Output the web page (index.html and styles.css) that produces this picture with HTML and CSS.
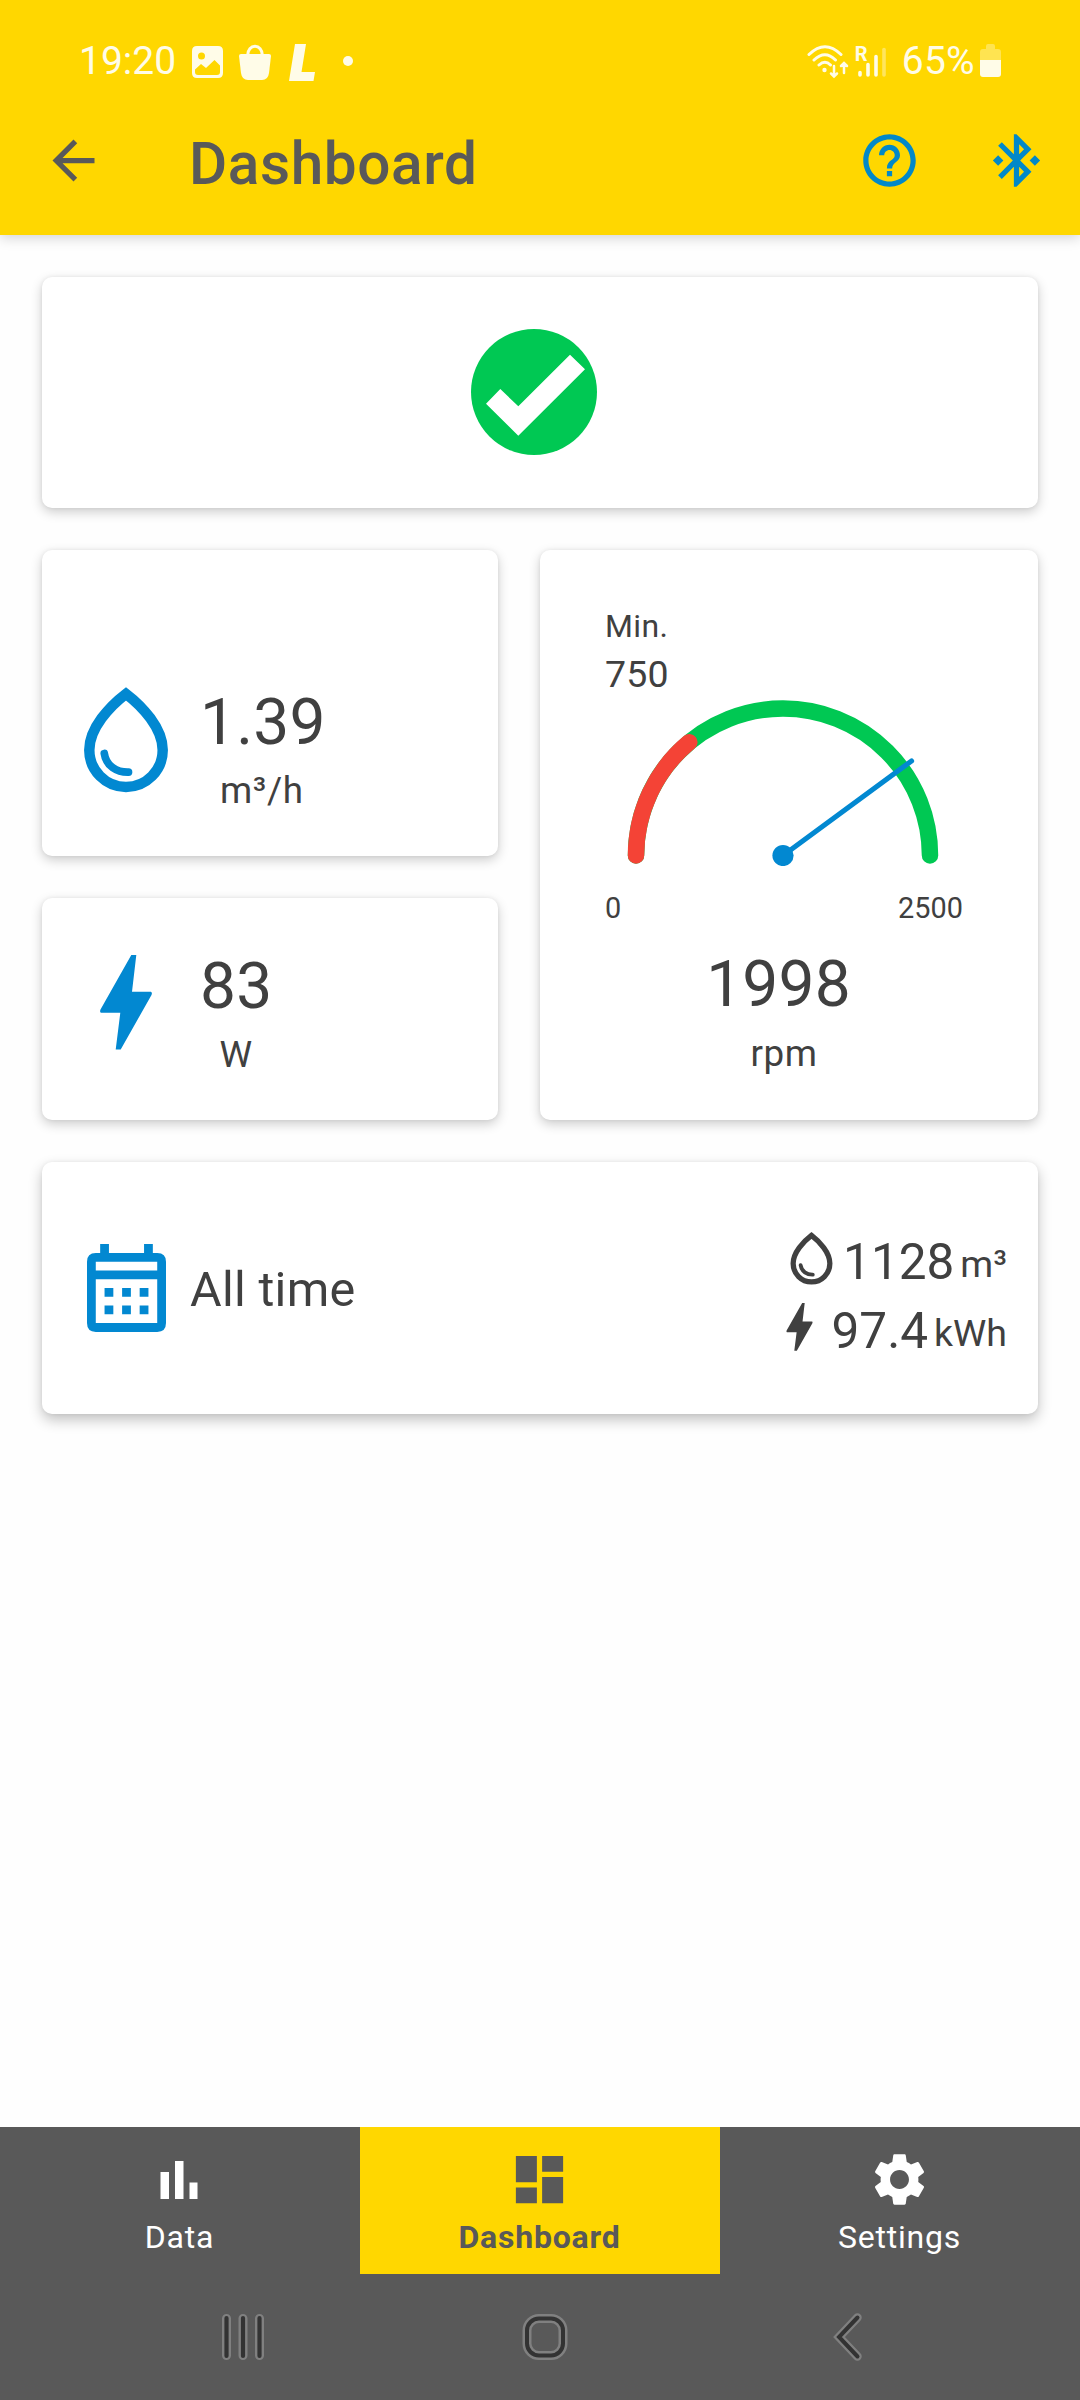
FILE: index.html
```html
<!DOCTYPE html>
<html lang="en">
<head>
<meta charset="utf-8">
<title>Dashboard</title>
<link rel="stylesheet" href="styles.css">
</head>
<body>
<svg class="defs" width="0" height="0" aria-hidden="true">
  <symbol id="drop" viewBox="0 0 84 106">
    <path d="M42 6.8C26 19 5.3 41 5.3 63A36.7 37 0 0 0 78.7 63C78.7 41 58 19 42 6.8Z" fill="none" stroke="currentColor" stroke-width="10.5" stroke-miterlimit="10"/>
    <path d="M20.3 66.500C22 79 33 85.500 44.500 85.200" fill="none" stroke="currentColor" stroke-width="7.7" stroke-linecap="round"/>
  </symbol>
  <symbol id="bolt" viewBox="0 0 52 95">
    <path d="M31.300 0H36.300L32 36.700H51Q52.500 37.500 51.500 40L20.700 94.500H15.700L20.300 57.800H1Q-.5 57 .5 54.500Z" fill="currentColor"/>
  </symbol>
</svg>
<header class="top">
  <div class="status">
    <div class="status-left">
      <span class="clock">19:20</span>
      <svg class="st-image" width="31" height="32" viewBox="0 0 31 32"><path fill="currentColor" fill-rule="evenodd" d="M5 0H26Q31 0 31 5V27Q31 32 26 32H5Q0 32 0 27V5Q0 0 5 0ZM9.500 6.500A3.500 3.500 0 1 0 9.500 13.500A3.500 3.500 0 1 0 9.500 6.500ZM3 23.500V26Q3 29 6 29H25Q28 29 28 26V19.500L22.500 14L14 22L9 18Z"/></svg>
      <svg class="st-bag" width="32" height="36" viewBox="0 0 32 36"><path d="M8.500 12C8.500 -1 23.500 -1 23.500 12" fill="none" stroke="currentColor" stroke-width="3"/><path fill="currentColor" d="M2 10H30Q32 10 32 12L30 29Q29 36 23 36H9Q3 36 2 29L0 12Q0 10 2 10Z"/></svg>
      <svg class="st-l" width="26" height="37" viewBox="0 0 26 37"><path fill="currentColor" d="M6 0H17L12.500 28H26L24.500 37H0Z"/></svg>
      <span class="st-dot"></span>
    </div>
    <div class="status-right">
      <svg class="st-wifi" width="43" height="34" viewBox="0 0 43 34"><g fill="none" stroke="currentColor" stroke-width="3" stroke-linecap="round"><path d="M2 9.500Q18 -6 34 9.500M7 15Q18 4.500 28.500 15M12 20Q18 14.500 23.500 20"/><path stroke-width="2.500" d="M27 21V31M24 28.500L27 31.500L30 28.500M37 28V19M34 21L37 18L40 21"/></g><circle cx="17.500" cy="25" r="2.200" fill="currentColor"/></svg>
      <div class="signal">
        <span class="roam">R</span>
        <svg width="32" height="34" viewBox="0 0 32 34"><g stroke="currentColor" stroke-width="3.600" stroke-linecap="round"><path d="M5 27.500V30M13 19.500V30M21 11.500V30"/><path d="M29 4.500V30" opacity=".4"/></g></svg>
      </div>
      <span class="percent">65%</span>
      <svg class="st-batt" width="21" height="33" viewBox="0 0 21 33"><path fill="currentColor" opacity=".35" d="M6 5V2Q6 0 8 0H13Q15 0 15 2V5H18Q21 5 21 8V16H0V8Q0 5 3 5Z"/><path fill="currentColor" d="M0 16H21V30Q21 33 18 33H3Q0 33 0 30Z"/></svg>
    </div>
  </div>
  <div class="appbar">
    <svg class="back" width="63" height="63" viewBox="0 0 24 24"><path fill="currentColor" d="M20 11H7.830l5.590-5.590L12 4l-8 8 8 8 1.410-1.410L7.830 13H20v-2z"/></svg>
    <h1>Dashboard</h1>
    <svg class="action" width="63" height="63" viewBox="0 0 24 24"><path fill="currentColor" d="M11 18h2v-2h-2v2zm1-16C6.480 2 2 6.480 2 12s4.480 10 10 10 10-4.480 10-10S17.520 2 12 2zm0 18c-4.410 0-8-3.590-8-8s3.590-8 8-8 8 3.590 8 8-3.590 8-8 8zm0-14c-2.210 0-4 1.790-4 4h2c0-1.100.9-2 2-2s2 .9 2 2c0 2-3 1.750-3 5h2c0-2.250 3-2.500 3-5 0-2.210-1.790-4-4-4z"/></svg>
    <svg class="action" width="63" height="63" viewBox="0 0 24 24"><path fill="currentColor" d="M7 12l-2-2-2 2 2 2 2-2zm10.710-4.290L12 2h-1v7.590L6.410 5 5 6.410 10.590 12 5 17.590 6.410 19 11 14.410V22h1l5.710-5.710-4.300-4.290 4.300-4.290zM13 5.830l1.880 1.880L13 9.590V5.830zm1.880 10.460L13 18.170v-3.760l1.880 1.880zM19 10l-2 2 2 2 2-2-2-2z"/></svg>
  </div>
</header>
<main>
  <section class="card state">
    <svg width="126" height="126" viewBox="0 0 126 126"><circle cx="63" cy="63" r="63" fill="#00c853"/><path fill="#fff" d="M15 74.700L29.300 60L47.300 77.300L99 25.700L114 40.300L47.300 106.700Z"/></svg>
  </section>
  <section class="card metric flow">
    <svg class="drop-lg" width="84" height="106"><use href="#drop"/></svg>
    <div class="reading"><span class="value">1.39</span><span class="unit">m³/h</span></div>
  </section>
  <section class="card metric power">
    <svg class="bolt-lg" width="52" height="95"><use href="#bolt"/></svg>
    <div class="reading"><span class="value">83</span><span class="unit">W</span></div>
  </section>
  <section class="card gauge">
    <div class="min-label">Min.</div>
    <div class="min-value">750</div>
    <svg class="dial" width="312" height="166" viewBox="0 0 312 166">
      <g fill="none" stroke-width="16.500" stroke-linecap="round">
        <path stroke="#00c853" d="M9 155.500A147 147 0 0 1 303 155.500"/>
        <path stroke="#f44336" d="M9 155.500A147 147 0 0 1 62.300 42.200"/>
        <path stroke="#0288d1" stroke-width="5.200" d="M156 155.500L284.500 61"/>
      </g>
      <circle cx="156" cy="155.500" r="10.600" fill="#0288d1"/>
    </svg>
    <div class="scale"><span>0</span><span>2500</span></div>
    <span class="value">1998</span>
    <span class="unit">rpm</span>
  </section>
  <section class="card total">
    <svg class="calendar" width="79" height="88" viewBox="0 0 18 20"><path fill="currentColor" fill-rule="evenodd" d="M3 0H5V2H13V0H15V2H16Q18 2 18 4V18Q18 20 16 20H2Q0 20 0 18V4Q0 2 2 2H3ZM2 4V6H16V4ZM2 8V18H16V8Z"/><path fill="currentColor" d="M4 10h2v2H4zM8 10h2v2H8zM12 10h2v2h-2zM4 14h2v2H4zM8 14h2v2H8zM12 14h2v2h-2z"/></svg>
    <span class="period">All time</span>
    <div class="sums">
      <div class="sum"><svg class="drop-sm" width="43" height="53"><use href="#drop"/></svg><span class="amount">1128</span><span class="sum-unit">m³</span></div>
      <div class="sum"><svg class="bolt-sm" width="27" height="48"><use href="#bolt"/></svg><span class="amount">97.4</span><span class="sum-unit">kWh</span></div>
    </div>
  </section>
</main>
<nav class="tabs">
  <div class="tab"><svg width="63" height="63" viewBox="0 0 63 63"><path fill="currentColor" d="M12.500 24H21V51H12.500ZM27 13H35.500V51H27ZM41.500 34.500H49.500V51H41.500Z"/></svg><span>Data</span></div>
  <div class="tab active"><svg width="63" height="63" viewBox="0 0 24 24"><path fill="currentColor" d="M3 13h8V3H3v10zm0 8h8v-6H3v6zm10 0h8V11h-8v10zm0-18v6h8V3h-8z"/></svg><span>Dashboard</span></div>
  <div class="tab"><svg width="63" height="63" viewBox="0 0 24 24"><path fill="currentColor" d="M19.14 12.94c.04-.3.06-.61.06-.94 0-.32-.02-.64-.07-.94l2.03-1.58c.18-.14.23-.41.12-.61l-1.92-3.32c-.12-.22-.37-.29-.59-.22l-2.39.96c-.5-.38-1.03-.7-1.62-.94l-.36-2.54c-.04-.24-.24-.41-.48-.41h-3.84c-.24 0-.43.17-.47.41l-.36 2.54c-.59.24-1.13.57-1.62.94l-2.39-.96c-.22-.08-.47 0-.59.22L2.74 8.87c-.12.21-.08.47.12.61l2.03 1.58c-.05.3-.09.63-.09.94s.02.64.07.94l-2.03 1.58c-.18.14-.23.41-.12.61l1.92 3.32c.12.22.37.29.59.22l2.39-.96c.5.38 1.03.7 1.62.94l.36 2.54c.05.24.24.41.48.41h3.84c.24 0 .44-.17.47-.41l.36-2.54c.59-.24 1.13-.56 1.62-.94l2.39.96c.22.08.47 0 .59-.22l1.92-3.32c.12-.22.07-.47-.12-.61l-2.01-1.58zM12 15.6c-1.98 0-3.6-1.62-3.6-3.6s1.620-3.6 3.6-3.6 3.6 1.62 3.6 3.6-1.62 3.6-3.6 3.6z"/></svg><span>Settings</span></div>
</nav>
<footer class="sysnav">
  <svg width="46" height="48" viewBox="0 0 46 48"><g stroke-linecap="round"><path stroke="#808080" stroke-width="9" d="M6.500 5.500V42.500M23 5.500V42.500M39.500 5.500V42.500"/><path stroke="#333" stroke-width="4.200" d="M6.500 5V43M23 5V43M39.500 5V43"/></g></svg>
  <svg class="home" width="46" height="48" viewBox="0 0 46 48"><g fill="none"><rect x="5" y="5.500" width="36" height="37" rx="12" stroke="#808080" stroke-width="9"/><rect x="5" y="5.500" width="36" height="37" rx="12" stroke="#333" stroke-width="4"/></g></svg>
  <svg class="prev" width="30" height="48" viewBox="0 0 30 48"><g fill="none" stroke-linecap="round"><path stroke="#808080" stroke-width="8.500" d="M24.500 4.500L6 24L24.500 43.500"/><path stroke="#333" stroke-width="4" d="M24.500 4.500L6 24L24.500 43.500"/></g></svg>
</footer>
</body>
</html>
```
FILE: styles.css
```css
* { box-sizing: border-box; }
body {
  margin: 0;
  width: 1080px;
  height: 2400px;
  display: flex;
  flex-direction: column;
  background: #fefefe;
  color: #404040;
  font-family: Roboto, "Liberation Sans", sans-serif;
  overflow: hidden;
}
svg { display: block; flex: none; }
.defs { position: absolute; }

.top {
  height: 235px;
  background: #ffd700;
  box-shadow: 0 3px 12px rgba(0, 0, 0, .17);
}
.status {
  height: 88px;
  padding: 36px 79px 0 79px;
  display: flex;
  justify-content: space-between;
  color: #fffce8;
}
.status-left, .status-right { display: flex; height: 50px; }
.clock, .percent { font-size: 39px; line-height: 50px; }
.clock { width: 113px; }
.st-image { margin-top: 10px; }
.st-bag { margin: 8px 0 0 16px; }
.st-l { margin: 8px 0 0 18px; }
.st-dot { width: 10px; height: 10px; margin: 20px 0 0 28px; border-radius: 50%; background: currentColor; }
.st-wifi { margin-top: 9px; }
.signal { position: relative; margin: 9px 0 0 5px; }
.roam { position: absolute; left: 0; top: -3px; font-size: 20px; line-height: 24px; font-weight: 700; }
.percent { margin-left: 15px; letter-spacing: .3px; }
.st-batt { margin: 8px 0 0 5px; }

.appbar {
  height: 147px;
  padding: 41px 32px 0 42px;
  display: flex;
}
.appbar svg, .tab.active { color: #595959; }
.appbar .action { color: #0288c8; }
.appbar h1 {
  flex: 1;
  margin: 1px 0 0 84px;
  color: #595959;
  font-size: 58.5px;
  line-height: 68px;
  letter-spacing: .6px;
  font-weight: 500;
}
.action + .action { margin-left: 64px; }

main {
  flex: 1;
  padding: 42px;
  display: grid;
  grid-template-columns: 456px 498px;
  grid-template-rows: 231px 306px 222px 252px;
  gap: 42px;
}
.card {
  border-radius: 10px;
  background: #fff;
  box-shadow: 0 4px 12px rgba(0, 0, 0, .2), 0 0 4px rgba(0, 0, 0, .06);
}
.state, .total { grid-column: 1 / 3; }
.state { padding: 52px 0 0 429px; }
.metric { display: flex; }
.reading { display: flex; flex-direction: column; align-items: center; }
.value { font-size: 64px; line-height: 74px; letter-spacing: .2px; }
.unit { margin-top: 9px; font-size: 36.75px; line-height: 43px; letter-spacing: .6px; }
.flow { padding: 135px 0 0 42px; }
.flow .reading { margin-top: 1px; }
.flow .unit { margin-right: 2px; }
.drop-lg, .bolt-lg, .calendar { color: #0288d1; }
.drop-lg { margin: 2px 32px 0 0; }
.power { grid-row: 3; padding: 51px 0 0 58px; }
.power .reading { margin-top: 1px; }
.bolt-lg { margin: 6px 48px 0 0; }
.gauge {
  grid-column: 2;
  grid-row: 2 / 4;
  padding: 56px 75px 0 65px;
  display: flex;
  flex-direction: column;
}
.min-label { font-size: 32px; line-height: 40px; letter-spacing: .4px; }
.min-value { margin-top: 6px; font-size: 37.5px; line-height: 44px; letter-spacing: .2px; }
.dial { margin: 4px 0 0 22px; }
.scale { margin-top: 25px; display: flex; justify-content: space-between; font-size: 28.875px; line-height: 34px; }
.gauge .value, .gauge .unit { align-self: center; }
.gauge .value { margin: 23px 11px 0 0; }
.gauge .unit { margin-top: 10px; }

.total {
  padding: 0 31px 0 45px;
  display: flex;
  align-items: flex-start;
  box-shadow: 0 6px 14px rgba(0, 0, 0, .24), 0 0 4px rgba(0, 0, 0, .06);
}
.calendar { margin-top: 82px; }
.period { flex: 1; margin: 100px 0 0 24px; font-size: 48.5px; line-height: 56px; letter-spacing: .3px; }
.sums { padding-top: 70px; }
.sum { height: 69px; display: flex; justify-content: flex-end; }
.amount { margin-top: 1px; font-size: 49.5px; line-height: 58px; }
.sum-unit { margin: 10px 0 0 6px; font-size: 37.5px; line-height: 44px; }
.drop-sm { margin-right: 10px; }
.bolt-sm { margin: 2px 19px 0 0; }

.tabs { height: 147px; display: grid; grid-template-columns: repeat(3, 1fr); background: #595959; }
.tab { padding: 21px 1px 0 0; display: flex; flex-direction: column; align-items: center; color: #fff; }
.tab span { margin-top: 7px; font-size: 32px; line-height: 38px; letter-spacing: .8px; }
.tab.active { background: #ffd700; }
.tab.active span { font-weight: 700; }
.sysnav { height: 126px; padding: 39px 0 0 220px; display: flex; background: #595959; }
.home { margin-left: 256px; }
.prev { margin-left: 265px; }
```
